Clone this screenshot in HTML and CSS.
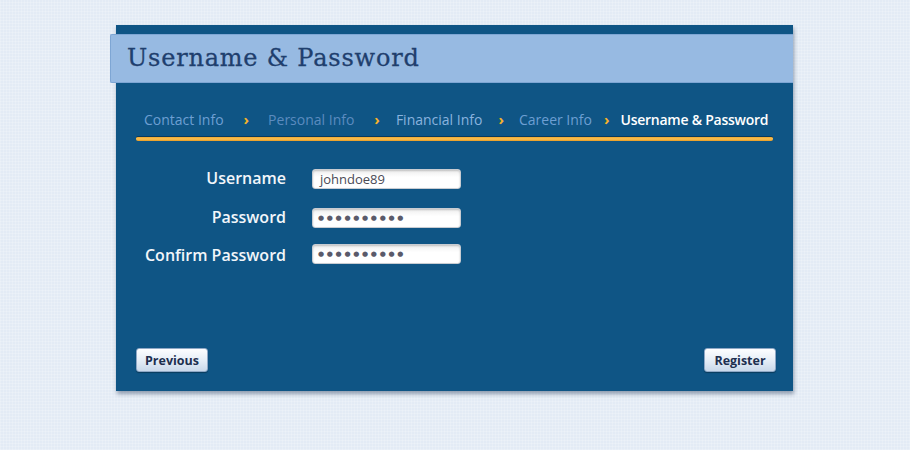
FILE: index.html
```html
<!DOCTYPE html>
<html>
<head>
<meta charset="utf-8">
<link rel="stylesheet" href="styles.css">
</head>
<body>
<div class="panel">
  <div class="header"><h1 class="title">Username &amp; Password</h1></div>
  <nav class="steps">
    <span class="step s1">Contact Info</span><span class="chev c1">›</span>
    <span class="step s2">Personal Info</span><span class="chev c2">›</span>
    <span class="step s3">Financial Info</span><span class="chev c3">›</span>
    <span class="step s4">Career Info</span><span class="chev c4">›</span>
    <span class="step active">Username &amp; Password</span>
  </nav>
  <div class="bar"></div>
  <form class="form">
    <label class="lbl">Username</label>
    <div class="field">johndoe89</div>
    <label class="lbl">Password</label>
    <div class="field dots">●●●●●●●●●●</div>
    <label class="lbl">Confirm Password</label>
    <div class="field dots">●●●●●●●●●●</div>
  </form>
  <div class="actions">
    <button class="btn" type="button">Previous</button>
    <button class="btn" type="button">Register</button>
  </div>
</div>
</body>
</html>
```

FILE: styles.css
```css
html, body {
  margin: 0;
  padding: 0;
}
body {
  width: 910px;
  height: 450px;
  overflow: hidden;
  background-color: #e3ebf5;
  background-image:
    repeating-linear-gradient(0deg, rgba(255,255,255,0.18) 0 1px, transparent 1px 3px),
    repeating-linear-gradient(90deg, rgba(255,255,255,0.18) 0 1px, transparent 1px 3px);
  font-family: "Open Sans", "Liberation Sans", sans-serif;
  padding-top: 25px;
  box-sizing: border-box;
}
.panel {
  margin-left: 116px;
  width: 677px;
  height: 366px;
  background: #0f5585;
  box-shadow: 1px 3px 4px rgba(40, 60, 90, 0.45);
  display: flex;
  flex-direction: column;
}
.header {
  margin-top: 9px;
  margin-left: -6px;
  height: 49px;
  background: #97bae2;
  border: 1px solid #7ea6d4;
  border-right: none;
  box-sizing: border-box;
  border-radius: 2px 0 0 2px;
  display: flex;
  align-items: center;
  padding-left: 16px;
}
.title {
  margin: 0;
  font-family: "DejaVu Serif", "Liberation Serif", serif;
  font-weight: normal;
  font-size: 24px;
  letter-spacing: 0.8px;
  color: #1f3f6e;
  padding-bottom: 2px;
  -webkit-text-stroke: 0.3px #1f3f6e;
}
.steps {
  display: flex;
  align-items: baseline;
  margin-top: 26px;
  padding-left: 28px;
  font-size: 14px;
  height: 22px;
  white-space: nowrap;
}
.step {
  color: #6d9fd3;
}
.s2 { color: #5b8bbf; }
.s3 { color: #8ab3df; }
.s4 { color: #6d9fd3; }
.step.active {
  color: #ffffff;
  font-weight: 600;
  letter-spacing: -0.25px;
}
.chev {
  color: #f6b22a;
  font-weight: 700;
  font-size: 15px;
}
.c1 { margin: 0 19px 0 20px; }
.c2 { margin: 0 16px 0 20px; }
.c3 { margin: 0 15px 0 16px; }
.c4 { margin: 0 11px 0 12px; }
.bar {
  margin: 5px 20px 0 20px;
  height: 4px;
  background: linear-gradient(#f0a830, #f9c155 50%, #e89a20);
  border-top: 1px solid #0a3a5c;
  border-radius: 2px;
}
.form {
  display: grid;
  grid-template-columns: 170px 149px;
  column-gap: 26px;
  row-gap: 0;
  margin: 0;
  padding-top: 28px;
}
.lbl {
  justify-self: end;
  color: #f2f6fa;
  font-size: 16px;
  font-weight: 600;
  line-height: 20px;
  height: 20px;
  margin-top: -1px;
}
.lbl:nth-of-type(2) { margin-top: 18px; }
.lbl:nth-of-type(3) { margin-top: 17px; }
.field {
  height: 20px;
  box-sizing: border-box;
  background: linear-gradient(#eeeeee, #ffffff 40%);
  border: 1px solid #c8ccd2;
  border-radius: 3px;
  box-shadow: inset 0 1px 2px rgba(0,0,0,0.2);
  font-size: 13px;
  line-height: 18px;
  color: #4a4a55;
  padding-left: 7px;
}
.field:nth-of-type(2) { margin-top: 19px; }
.field:nth-of-type(3) { margin-top: 16px; }
.dots {
  font-family: "DejaVu Sans", sans-serif;
  font-size: 7px;
  letter-spacing: 2.7px;
  color: #5a5a6a;
  line-height: 18px;
  padding-left: 5px;
  white-space: nowrap;
}
.actions {
  margin-top: auto;
  margin-bottom: 19px;
  display: flex;
  justify-content: space-between;
  padding: 0 17px 0 20px;
}
.btn {
  width: 72px;
  height: 24px;
  border: 1px solid #8fa8c6;
  border-radius: 3px;
  background: linear-gradient(#fdfeff, #e6eef7 50%, #c9d8ea);
  box-shadow: 0 1px 1px rgba(0,0,0,0.3);
  font-family: "Open Sans", "Liberation Sans", sans-serif;
  font-weight: 700;
  font-size: 12.5px;
  color: #1d2f4f;
  padding: 0;
}
```
